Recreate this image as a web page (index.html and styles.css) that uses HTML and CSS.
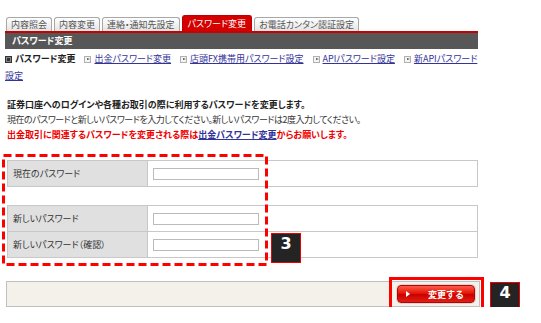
FILE: index.html
```html
<!DOCTYPE html>
<html lang="ja">
    <head>
        <meta charset="UTF-8">
        <title>パスワード変更</title>
        <link rel="stylesheet" href="styles.css">
    </head>
    <body>
        <div id="page">
            <!-- Tab row -->
            <ul id="tabs">
                <li class="tab">内容照会</li>
                <li class="tab">内容変更</li>
                <li class="tab">連絡・通知先設定</li>
                <li class="tab active">パスワード変更</li>
                <li class="tab">お電話カンタン認証設定</li>
            </ul>
            <div id="title-bar">パスワード変更</div>

            <!-- Sub navigation -->
            <div id="sub-nav">
                <span class="nav-itm current"><i class="mark"></i>パスワード変更</span>
                <a class="nav-itm" href="#"><i class="arrow"></i>出金パスワード変更</a>
                <a class="nav-itm" href="#"><i class="arrow"></i>店頭FX携帯用パスワード設定</a>
                <a class="nav-itm" href="#"><i class="arrow"></i>APIパスワード設定</a>
                <a class="nav-itm last" href="#"><i class="arrow"></i><span class="nw">新APIパスワード</span><wbr>設定</a>
            </div>

            <div id="intro">
                <p class="lead">証券口座へのログインや各種お取引の際に利用するパスワードを変更します。</p>
                <p class="note">現在のパスワードと新しいパスワードを入力してください。新しいパスワードは2度入力してください。</p>
                <p class="warn">出金取引に関連するパスワードを変更される際は<a href="#">出金パスワード変更</a>からお願いします。</p>
            </div>

            <!-- Password form -->
            <div id="form-area">
                <table class="pswd-table">
                    <tr>
                        <th>現在のパスワード</th>
                        <td><input type="password"></td>
                    </tr>
                </table>
                <table class="pswd-table">
                    <tr>
                        <th>新しいパスワード</th>
                        <td><input type="password"></td>
                    </tr>
                    <tr>
                        <th>新しいパスワード（確認）</th>
                        <td><input type="password"></td>
                    </tr>
                </table>

                <svg class="dash-box" width="266" height="112" viewBox="0 0 266 112">
                    <rect x="1.5" y="1.5" width="263" height="109" fill="none" stroke="#ff0000" stroke-width="3" stroke-dasharray="8 4"></rect>
                </svg>
                <span class="badge badge-3">3</span>
            </div>

            <div id="action-bar">
                <button id="submit-btn"><i class="btn-arrow"></i>変更する</button>
                <span class="hl-box"></span>
                <span class="badge badge-4">4</span>
            </div>
        </div>
    </body>
</html>
```

FILE: styles.css
```css
* {
    margin: 0;
    padding: 0;
    box-sizing: border-box;
}

body {
    font: 9px "Noto Sans CJK JP", "Noto Sans", sans-serif;
    font-feature-settings: "palt";
    color: #333;
    background-color: white;
}

#page {
    position: relative;
    width: 541px;
    padding-top: 15px;
}

/* tabs */
#tabs {
    display: flex;
    align-items: flex-end;
    gap: 2px;
    margin-left: 6px;
    list-style: none;
}

.tab {
    height: 14px;
    padding: 0 4px;
    line-height: 13px;
    font-size: 9px;
    color: #555;
    border: 1px solid #a8a8a8;
    border-bottom: none;
    border-radius: 3px 3px 0 0;
    background: linear-gradient(#ffffff, #e4e4e4);
}

.tab.active {
    height: 16px;
    line-height: 15px;
    padding: 0 5px;
    color: white;
    border-color: #c00000;
    background: #d40000;
}

#title-bar {
    width: 473px;
    height: 18px;
    margin-left: 5px;
    padding-left: 7px;
    line-height: 16px;
    font-weight: bold;
    color: white;
    background-color: #575757;
    border-top: 2px solid #c80000;
}

/* sub navigation */
#sub-nav {
    width: 475px;
    margin-left: 5px;
    padding-top: 1px;
    line-height: 17px;
}

.nav-itm {
    margin-right: 7px;
    white-space: nowrap;
}

.nav-itm.last {
    margin-right: 0;
    white-space: normal;
}

.nw {
    white-space: nowrap;
}

.current {
    font-weight: bold;
    color: #222;
}

#sub-nav a {
    color: #333399;
    text-decoration: underline;
}

.mark, .arrow {
    display: inline-block;
    width: 7px;
    height: 7px;
    margin-right: 3px;
    vertical-align: -0.5px;
}

.mark {
    background-color: #333;
    border: 1px solid #333;
    box-shadow: inset 0 0 0 1px #888;
}

.arrow {
    position: relative;
    border: 1px solid #b0b0b0;
    background-color: #f4f4f4;
}

.arrow::after {
    content: "";
    position: absolute;
    top: 1px;
    left: 2px;
    border-left: 3px solid #555;
    border-top: 1.5px solid transparent;
    border-bottom: 1.5px solid transparent;
}

/* intro text */
#intro {
    margin: 13px 0 0 7px;
    line-height: 15px;
}

.lead {
    font-weight: bold;
    color: #222;
}

.note {
    letter-spacing: -0.5px;
}

.warn {
    font-weight: bold;
    color: #f00000;
}

.warn a {
    color: #333399;
    text-decoration: underline;
}

/* form */
#form-area {
    position: relative;
    padding: 18px 0 23px 7px;
}

.pswd-table {
    width: 471px;
    border-collapse: collapse;
    margin-bottom: 18px;
}

.pswd-table:last-of-type {
    margin-bottom: 0;
}

.pswd-table th, .pswd-table td {
    height: 26px;
    border: 1px solid #c8c8c8;
}

.pswd-table th {
    width: 140px;
    padding-left: 5px;
    text-align: left;
    font-weight: normal;
    color: #333;
    background-color: #e0e0e0;
}

.pswd-table td {
    padding-left: 5px;
}

.pswd-table input {
    display: block;
    width: 106px;
    height: 12px;
    border: 1px solid #bbb;
    outline: none;
}

.dash-box {
    position: absolute;
    top: 12px;
    left: 2px;
}

.badge {
    position: absolute;
    width: 30px;
    height: 30px;
    line-height: 28px;
    text-align: center;
    font: bold 16px "DejaVu Sans", sans-serif;
    color: white;
    background-color: #242424;
    border: 1px solid #ee0000;
}

.badge-3 {
    top: 91px;
    left: 271px;
}

/* bottom bar */
#action-bar {
    position: relative;
    display: flex;
    justify-content: flex-end;
    align-items: center;
    width: 474px;
    height: 26px;
    margin-left: 6px;
    padding-right: 4px;
    background-color: #f4f1ea;
    border: 1px solid #c0c0c0;
}

#submit-btn {
    display: flex;
    align-items: center;
    gap: 18px;
    width: 78px;
    height: 18px;
    padding-left: 8px;
    font: bold 9px "Noto Sans CJK JP", sans-serif;
    color: white;
    border: 1px solid #c00000;
    border-radius: 4px;
    background: linear-gradient(#ff5a4a, #e01000 50%, #c80000 51%, #e02010);
    box-shadow: 0 0 0 1px #d8d8d8;
}

.btn-arrow {
    border-left: 4px solid white;
    border-top: 3px solid transparent;
    border-bottom: 3px solid transparent;
}

.hl-box {
    position: absolute;
    top: -5px;
    left: 382px;
    width: 95px;
    height: 36px;
    border: 3px solid #ff0000;
}

.badge-4 {
    top: 0px;
    left: 483px;
}
```
